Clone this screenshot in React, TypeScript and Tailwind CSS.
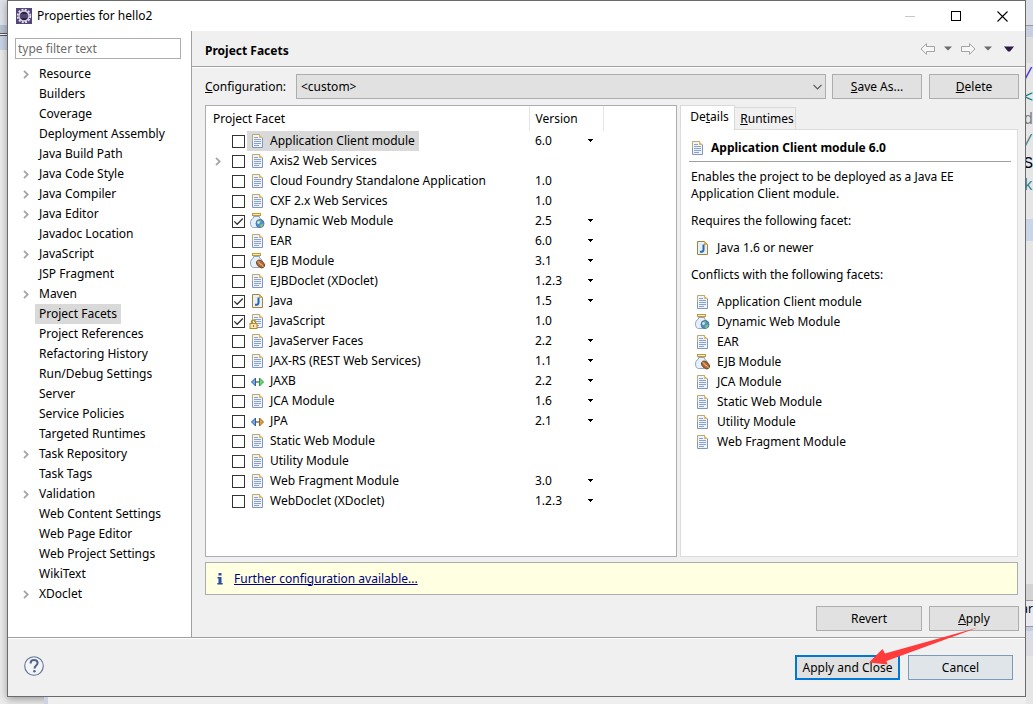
import { useState, type ReactNode } from "react";

type IconName = "doc" | "web" | "ejb" | "java" | "js" | "jaxb" | "jpa";

type Facet = {
  name: string;
  icon: IconName;
  version?: string;
  hasMenu?: boolean;
  checked?: boolean;
  expandable?: boolean;
};

const PAGES: { name: string; expandable?: boolean }[] = [
  { name: "Resource", expandable: true },
  { name: "Builders" },
  { name: "Coverage" },
  { name: "Deployment Assembly" },
  { name: "Java Build Path" },
  { name: "Java Code Style", expandable: true },
  { name: "Java Compiler", expandable: true },
  { name: "Java Editor", expandable: true },
  { name: "Javadoc Location" },
  { name: "JavaScript", expandable: true },
  { name: "JSP Fragment" },
  { name: "Maven", expandable: true },
  { name: "Project Facets" },
  { name: "Project References" },
  { name: "Refactoring History" },
  { name: "Run/Debug Settings" },
  { name: "Server" },
  { name: "Service Policies" },
  { name: "Targeted Runtimes" },
  { name: "Task Repository", expandable: true },
  { name: "Task Tags" },
  { name: "Validation", expandable: true },
  { name: "Web Content Settings" },
  { name: "Web Page Editor" },
  { name: "Web Project Settings" },
  { name: "WikiText" },
  { name: "XDoclet", expandable: true }
];

const FACETS: Facet[] = [
  { name: "Application Client module", icon: "doc", version: "6.0", hasMenu: true },
  { name: "Axis2 Web Services", icon: "doc", expandable: true },
  { name: "Cloud Foundry Standalone Application", icon: "doc", version: "1.0" },
  { name: "CXF 2.x Web Services", icon: "doc", version: "1.0" },
  { name: "Dynamic Web Module", icon: "web", version: "2.5", hasMenu: true, checked: true },
  { name: "EAR", icon: "doc", version: "6.0", hasMenu: true },
  { name: "EJB Module", icon: "ejb", version: "3.1", hasMenu: true },
  { name: "EJBDoclet (XDoclet)", icon: "doc", version: "1.2.3", hasMenu: true },
  { name: "Java", icon: "java", version: "1.5", hasMenu: true, checked: true },
  { name: "JavaScript", icon: "js", version: "1.0", checked: true },
  { name: "JavaServer Faces", icon: "doc", version: "2.2", hasMenu: true },
  { name: "JAX-RS (REST Web Services)", icon: "doc", version: "1.1", hasMenu: true },
  { name: "JAXB", icon: "jaxb", version: "2.2", hasMenu: true },
  { name: "JCA Module", icon: "doc", version: "1.6", hasMenu: true },
  { name: "JPA", icon: "jpa", version: "2.1", hasMenu: true },
  { name: "Static Web Module", icon: "doc" },
  { name: "Utility Module", icon: "doc" },
  { name: "Web Fragment Module", icon: "doc", version: "3.0", hasMenu: true },
  { name: "WebDoclet (XDoclet)", icon: "doc", version: "1.2.3", hasMenu: true }
];

const CONFLICTS: { name: string; icon: IconName }[] = [
  { name: "Application Client module", icon: "doc" },
  { name: "Dynamic Web Module", icon: "web" },
  { name: "EAR", icon: "doc" },
  { name: "EJB Module", icon: "ejb" },
  { name: "JCA Module", icon: "doc" },
  { name: "Static Web Module", icon: "doc" },
  { name: "Utility Module", icon: "doc" },
  { name: "Web Fragment Module", icon: "doc" }
];

export default function App() {
  return (
    <div className="flex min-h-screen bg-[#e9e9e9] font-['Noto_Sans','Open_Sans',sans-serif] text-xs text-black">
      <LeftBackdrop />
      <div className="flex min-w-0 flex-1 flex-col">
        <main className="flex flex-1 flex-col border border-[#6b6b6b] bg-[#f0f0f0] shadow-[0_2px_8px_rgba(0,0,0,0.35)]">
          <TitleBar />
          <div className="flex flex-1">
            <PageTree />
            <FacetsPage />
          </div>
          <Footer />
        </main>
        <div className="flex h-[7px] pl-[37px]">
          <div className="w-1 bg-[#cdd3e4]" />
          <div className="flex-1 bg-[#efefef]" />
        </div>
      </div>
      <RightBackdrop />
    </div>
  );
}

function TitleBar() {
  return (
    <header className="flex h-[30px] items-center bg-white pl-2">
      <EclipseIcon />
      <h1 className="ml-[5px] flex-1">Properties for hello2</h1>
      <button type="button" aria-label="Minimize" className="flex h-full w-[46px] items-center justify-center">
        <svg width="11" height="11" shapeRendering="crispEdges">
          <path d="M0 5.5h10" stroke="#c8c8c8" />
        </svg>
      </button>
      <button type="button" aria-label="Maximize" className="flex h-full w-[46px] items-center justify-center">
        <svg width="11" height="11" shapeRendering="crispEdges">
          <rect x="0.5" y="0.5" width="9" height="9" fill="none" stroke="#000" />
        </svg>
      </button>
      <button type="button" aria-label="Close" className="flex h-full w-[46px] items-center justify-center">
        <svg width="11" height="11">
          <path d="M0.5 0.5l10 10M10.5 0.5l-10 10" stroke="#000" strokeWidth="1.1" />
        </svg>
      </button>
    </header>
  );
}

function PageTree() {
  const [filter, setFilter] = useState("");
  const [selected, setSelected] = useState("Project Facets");
  const pages = PAGES.filter((page) =>
    page.name.toLowerCase().includes(filter.toLowerCase())
  );

  return (
    <nav className="w-[184px] shrink-0 border-r border-[#a0a0a0] bg-white pt-[7px] pl-[7px]">
      <input
        aria-label="type filter text"
        className="block h-[21px] w-[166px] border border-[#abadb3] px-[2px] placeholder:text-[#6d6d6d]"
        placeholder="type filter text"
        value={filter}
        onChange={(event) => setFilter(event.target.value)}
      />
      <ul className="mt-[5px]">
        {pages.map((page) => (
          <li key={page.name} className="flex h-5 items-center">
            <span className="flex w-5 justify-center pl-[2px]">
              {page.expandable ? <Expander name={page.name} /> : null}
            </span>
            <button
              type="button"
              className={`h-5 px-1 ${selected === page.name ? "bg-[#d9d9d9]" : ""}`}
              onClick={() => setSelected(page.name)}
            >
              {page.name}
            </button>
          </li>
        ))}
      </ul>
    </nav>
  );
}

function Expander({ name }: { name: string }) {
  return (
    <button type="button" aria-label={`Expand ${name}`}>
      <svg width="6" height="9" fill="none">
        <path d="M1 0.8L4.7 4.5L1 8.2" stroke="#a6a6a6" strokeWidth="1.8" />
      </svg>
    </button>
  );
}

function FacetsPage() {
  return (
    <section className="flex min-w-0 flex-1 flex-col">
      <div className="flex h-9 items-center border-b border-[#a0a0a0] pr-[7px] pl-[13px]">
        <h2 className="flex-1 pt-1 font-bold">Project Facets</h2>
        <div className="flex items-center">
          <HistoryButton label="Back" />
          <MenuArrow label="Back history" color="#6a6a70" />
          <HistoryButton label="Forward" flip />
          <MenuArrow label="Forward history" color="#6a6a70" />
          <MenuArrow label="View menu" color="#2c1a44" big />
        </div>
      </div>

      <div className="flex flex-1 flex-col border-t border-white pt-[6px] pr-[6px] pb-[6px] pl-[13px]">
        <div className="flex items-center">
          <label htmlFor="configuration" className="w-[91px]">
            <u>C</u>onfiguration:
          </label>
          <div className="grid flex-1 items-center">
            <select
              id="configuration"
              className="col-start-1 row-start-1 h-[25px] appearance-none border border-[#adadad] bg-[#e1e1e1] pl-1"
            >
              <option>&lt;custom&gt;</option>
            </select>
            <svg
              className="pointer-events-none col-start-1 row-start-1 mr-1 justify-self-end"
              width="9"
              height="6"
              fill="none"
            >
              <path d="M0.5 0.8L4.5 4.8L8.5 0.8" stroke="#555" strokeWidth="1.2" />
            </svg>
          </div>
          <div className="ml-[6px] flex gap-[7px]">
            <PushButton className="w-[90px]">
              <u>S</u>ave As...
            </PushButton>
            <PushButton className="w-[90px]">
              <u>D</u>elete
            </PushButton>
          </div>
        </div>

        <div className="mt-[6px] mr-px flex flex-1 gap-[3px]">
          <FacetTable />
          <FacetDetails />
        </div>

        <div className="mt-[5px] mr-px flex h-[33px] items-center border border-[#abadb3] bg-[#ffffe1] pl-[11px]">
          <svg width="6" height="12" fill="#2f4ea0">
            <path d="M1.5 0h3v2.4h-3zM0.5 4h4v6h1.2v1.5H0.3V10h1.2V5.5h-1z" />
          </svg>
          <a href="#further" className="ml-[11px] text-[#000080] underline">
            Further configuration available...
          </a>
        </div>

        <div className="mt-[11px] flex justify-end gap-[7px]">
          <PushButton className="w-[106px]">Revert</PushButton>
          <PushButton className="w-[90px]">
            <u>A</u>pply
          </PushButton>
        </div>
      </div>
    </section>
  );
}

function FacetTable() {
  const [checked, setChecked] = useState(
    FACETS.filter((facet) => facet.checked).map((facet) => facet.name)
  );

  const toggle = (name: string) => {
    setChecked(
      checked.includes(name)
        ? checked.filter((item) => item !== name)
        : [...checked, name]
    );
  };

  return (
    <div className="min-w-0 flex-1 border border-[#abadb3] bg-white">
      <table className="w-full table-fixed border-collapse">
        <thead>
          <tr className="h-[25px] text-left">
            <th className="border-r border-[#e5e5e5] pl-[7px] font-normal">Project Facet</th>
            <th className="w-[74px] border-r border-[#e5e5e5] pl-[6px] font-normal">Version</th>
            <th className="w-[73px]" />
          </tr>
        </thead>
        <tbody>
          {FACETS.map((facet, index) => (
            <tr key={facet.name} className="h-5">
              <td className="p-0">
                <div className="flex h-5 items-center">
                  <span className="flex w-[26px] justify-center pr-[2px]">
                    {facet.expandable ? <Expander name={facet.name} /> : null}
                  </span>
                  <CheckBox
                    id={`facet-${index}`}
                    checked={checked.includes(facet.name)}
                    onChange={() => toggle(facet.name)}
                  />
                  <label
                    htmlFor={`facet-${index}`}
                    className={`ml-[2px] flex h-5 items-center gap-[5px] pr-1 pl-[2px] ${
                      index === 0 ? "bg-[#d9d9d9]" : ""
                    }`}
                  >
                    <FacetIcon name={facet.icon} />
                    {facet.name}
                  </label>
                </div>
              </td>
              <td className="p-0">
                <div className="flex items-center justify-between pr-[10px] pl-[6px]">
                  {facet.version}
                  {facet.hasMenu ? (
                    <button type="button" aria-label={`${facet.name} version`} className="pb-[2px]">
                      <svg width="5" height="3" shapeRendering="crispEdges">
                        <path d="M0 0h5v1h-1v1h-1v1h-1v-1h-1v-1h-1z" />
                      </svg>
                    </button>
                  ) : null}
                </div>
              </td>
              <td />
            </tr>
          ))}
        </tbody>
      </table>
    </div>
  );
}

function CheckBox({
  id,
  checked,
  onChange
}: {
  id: string;
  checked: boolean;
  onChange: () => void;
}) {
  return (
    <span className="grid size-[13px]">
      <input
        id={id}
        type="checkbox"
        className="col-start-1 row-start-1 size-[13px] appearance-none border border-[#333] bg-white"
        checked={checked}
        onChange={onChange}
      />
      {checked ? (
        <svg className="pointer-events-none col-start-1 row-start-1" width="13" height="13" fill="none">
          <path d="M2.3 6.4L5.2 9.3L10.8 3.5" stroke="#333" strokeWidth="1.3" />
        </svg>
      ) : null}
    </span>
  );
}

function FacetDetails() {
  const [tab, setTab] = useState("details");

  return (
    <div className="flex w-[338px] shrink-0 flex-col">
      <div role="tablist" className="flex h-6 items-end">
        <button
          type="button"
          role="tab"
          aria-selected={tab === "details"}
          className="relative z-10 -mb-px h-[25px] w-[55px] border border-b-0 border-[#d9d9d9] bg-white pb-[2px] pl-1"
          onClick={() => setTab("details")}
        >
          De<u>t</u>ails
        </button>
        <button
          type="button"
          role="tab"
          aria-selected={tab === "runtimes"}
          className="h-[22px] w-[61px] border border-b-0 border-l-0 border-[#d9d9d9] pl-1"
          onClick={() => setTab("runtimes")}
        >
          <u>R</u>untimes
        </button>
      </div>
      <div role="tabpanel" className="flex-1 border border-[#dcdcdc] bg-white pt-2 pr-[6px] pl-2">
        <div className="flex h-6 items-center gap-[6px] border-b border-[#a0a0a0] pb-1 pl-0">
          <FacetIcon name="doc" />
          <h3 className="font-bold">Application Client module 6.0</h3>
        </div>
        <div className="px-[2px] pt-[6px]">
          <p className="leading-[17px]">
            Enables the project to be deployed as a Java EE Application Client module.
          </p>
          <p className="mt-[10px] leading-[18px]">Requires the following facet:</p>
          <ul className="mt-2">
            <li className="flex h-5 items-center gap-[7px] pl-[3px]">
              <FacetIcon name="java" />
              Java 1.6 or newer
            </li>
          </ul>
          <p className="mt-2 leading-[18px]">Conflicts with the following facets:</p>
          <ul className="mt-2">
            {CONFLICTS.map((facet) => (
              <li key={facet.name} className="flex h-5 items-center gap-[7px] pl-[3px]">
                <FacetIcon name={facet.icon} />
                {facet.name}
              </li>
            ))}
          </ul>
        </div>
      </div>
    </div>
  );
}

function Footer() {
  return (
    <footer className="relative border-t border-[#a0a0a0]">
      <div className="flex h-[58px] items-center justify-end gap-2 border-t border-white pr-3 pl-4">
        <button type="button" aria-label="Help" className="mr-auto pb-[3px]">
          <svg width="20" height="20" viewBox="0 0 20 20" fill="none">
            <circle cx="10" cy="10" r="9.3" fill="#f3f4f7" stroke="#5f7292" strokeWidth="1.1" />
            <path
              d="M6.6 7.4C6.6 5.2 8 4 10 4s3.6 1.2 3.6 3.1c0 2.3-3.1 2.6-3.1 5.4"
              stroke="#51658a"
              strokeWidth="2"
            />
            <circle cx="10.4" cy="15.2" r="1.3" fill="#51658a" />
          </svg>
        </button>
        <button type="button" className="h-[25px] w-[105px] border-2 border-[#0078d7] bg-[#e1e1e1]">
          Apply and Close
        </button>
        <button type="button" className="h-[25px] w-[105px] border border-[#7a9cba] bg-[#dfe5e9]">
          Cancel
        </button>
      </div>
      <svg
        className="pointer-events-none absolute -top-3 right-[45px]"
        width="112"
        height="40"
        fill="#ff3b3b"
      >
        <path d="M110 1.5L18.5 35L19.5 38.5L1 36.5L14.5 23L17 27.5Z" />
      </svg>
    </footer>
  );
}

function PushButton({ className, children }: { className: string; children: ReactNode }) {
  return (
    <button type="button" className={`h-[25px] border border-[#adadad] bg-[#e1e1e1] ${className}`}>
      {children}
    </button>
  );
}

function HistoryButton({ label, flip }: { label: string; flip?: boolean }) {
  return (
    <button type="button" aria-label={label}>
      <svg width="16" height="12" fill="none" className={flip ? "-scale-x-100" : ""}>
        <path
          d="M1 6L6.5 0.7V3.5H14.5V8.5H6.5V11.3Z"
          fill="#f7f7f7"
          stroke="#a3a3a3"
          strokeLinejoin="round"
        />
      </svg>
    </button>
  );
}

function MenuArrow({ label, color, big }: { label: string; color: string; big?: boolean }) {
  return (
    <button type="button" aria-label={label} className={big ? "px-1" : "flex w-6 justify-center"}>
      {big ? (
        <svg width="10" height="6" fill={color}>
          <path d="M0 0.5h10L6 5.5H4z" />
        </svg>
      ) : (
        <svg width="8" height="5" fill={color}>
          <path d="M0 0.5h8L4 4.5z" />
        </svg>
      )}
    </button>
  );
}

function EclipseIcon() {
  return (
    <svg width="16" height="16" viewBox="0 0 16 16">
      <rect width="16" height="16" fill="#54457c" />
      <circle cx="8" cy="8" r="6.3" fill="none" stroke="#e9e6ee" strokeWidth="1.8" strokeDasharray="2 1.3" />
      <circle cx="8" cy="8" r="5" fill="#2a2340" stroke="#d9d6e2" strokeWidth="1.3" />
      <path d="M4 7h8M4 9h8" stroke="#7468a0" />
    </svg>
  );
}

function DocShape() {
  return (
    <>
      <path d="M3.5 1.5h7l3 3v10h-10z" fill="#eef4fc" />
      <path d="M3.5 9V1.5h7.5" fill="none" stroke="#b9a96c" />
      <path d="M3.5 8v6.5h10V4.5" fill="none" stroke="#8295bd" />
      <path d="M10 1l4 4h-4z" fill="#dcb867" />
      <path d="M5 4.5h4M5 6.5h7M5 8.5h7M5 10.5h7M5 12.5h5" stroke="#8ba0cc" />
    </>
  );
}

function JarShape() {
  return (
    <>
      <path
        d="M4.5 3.5v1.5C2.500 6 1.500 7.500 1.500 10c0 2.500 1 4.500 3 4.500h6c2 0 3-2 3-4.500 0-2.500-1-4-3-5V3.500z"
        fill="#e6f0fa"
        stroke="#8fa6c6"
      />
      <rect x="3.5" y="0.5" width="8" height="2" fill="#fbeebb" stroke="#c29a34" />
    </>
  );
}

function FacetIcon({ name }: { name: IconName }) {
  return (
    <svg className="shrink-0" width="16" height="16" viewBox="0 0 16 16">
      {name === "doc" ? <DocShape /> : null}
      {name === "web" ? (
        <>
          <JarShape />
          <circle cx="11" cy="10.5" r="4" fill="#4d91cf" stroke="#4a74a6" />
          <path d="M8 9.5c1-2 3-2.5 4-2l-1 2.5-2 1zM11 12l2-1.5 1.5.5-1.5 3-1.5.5z" fill="#84c26b" />
          <circle cx="9.5" cy="9.5" r="1.2" fill="#d8ecf8" />
        </>
      ) : null}
      {name === "ejb" ? (
        <>
          <JarShape />
          <ellipse cx="11.5" cy="11" rx="4.4" ry="3" transform="rotate(42 11.5 11)" fill="#b4703c" stroke="#7b431c" />
          <path d="M8.5 8.2c2 .5 1.8 2.8 3.4 3.2s1.600 1.400 2.400 2.400" fill="none" stroke="#f0c79c" />
        </>
      ) : null}
      {name === "java" ? (
        <>
          <path d="M3.5 1.5h7l3 3v10h-10z" fill="#e6f0fa" stroke="#a68538" />
          <path d="M10 1l4 4h-4z" fill="#dcae4c" />
          <path d="M9.5 4.5v5.3c0 1.500-.9 2.200-3.500 2" fill="none" stroke="#2b6a9e" strokeWidth="2" />
        </>
      ) : null}
      {name === "js" ? (
        <>
          <DocShape />
          <path d="M2.500 10.500V9c0-2.600 4-2.600 4 0v1.500" fill="none" stroke="#b58a1e" strokeWidth="1.3" />
          <rect x="1" y="10.5" width="7" height="5" fill="#f8e6ae" stroke="#b58a1e" />
          <path d="M4.500 12v2" stroke="#9a7420" />
        </>
      ) : null}
      {name === "jaxb" || name === "jpa" ? (
        <>
          <path d="M6.500 5v8L2.500 9z" fill="#7fa9dc" stroke="#2f5f9e" />
          <path d="M7 9h3" stroke="#333" />
          <path
            d="M10.500 5v8L14.500 9z"
            fill={name === "jaxb" ? "#6fd774" : "#e6a23c"}
            stroke={name === "jaxb" ? "#2b9a3d" : "#9a6418"}
          />
        </>
      ) : null}
    </svg>
  );
}

// Slices of the workbench that show on either side of the dialog.
function LeftBackdrop() {
  return (
    <div className="flex w-[7px] shrink-0 flex-col bg-[#ececec]">
      <div className="h-[25px] bg-[#dfe2ea]" />
      <div className="h-2 bg-[#b9c4d6]" />
      <div className="h-[3px] border-y border-[#555] bg-white" />
      <div className="h-[14px] bg-[#c9d6e6]" />
    </div>
  );
}

function RightBackdrop() {
  return (
    <div className="flex w-[7px] shrink-0 flex-col overflow-hidden bg-[#e6e6e6] font-['Liberation_Mono',monospace] text-base">
      <div className="h-[25px] bg-[#dcdfe8]" />
      <div className="h-3 border-t border-[#999] bg-[#c8cde0]" />
      <div className="h-[26px] bg-[#dedede]" />
      <div className="flex h-[23px] justify-end text-[#3f20e0]">/</div>
      <div className="flex h-[22px] justify-end text-[#008080]">&lt;</div>
      <div className="flex h-[22px] justify-end text-[#7f7f7f]">d</div>
      <div className="flex h-[22px] justify-end text-[#3f7f7f]">/</div>
      <div className="flex h-[22px] justify-end text-black">S</div>
      <div className="flex h-[45px] justify-end text-[#3f7f7f]">k</div>
      <div className="h-[22px] bg-[#cbd5e8]" />
      <div className="h-[343px]" />
      <div className="h-4 bg-[#d3d3d3]" />
      <div className="flex h-[27px] justify-end border-y border-[#999] bg-[#e8e8ee] font-['Noto_Sans',sans-serif] text-xs">
        ar
      </div>
      <div className="h-1 bg-[#c8cde0]" />
      <div className="h-[25px] bg-[#dcdde4]" />
    </div>
  );
}
